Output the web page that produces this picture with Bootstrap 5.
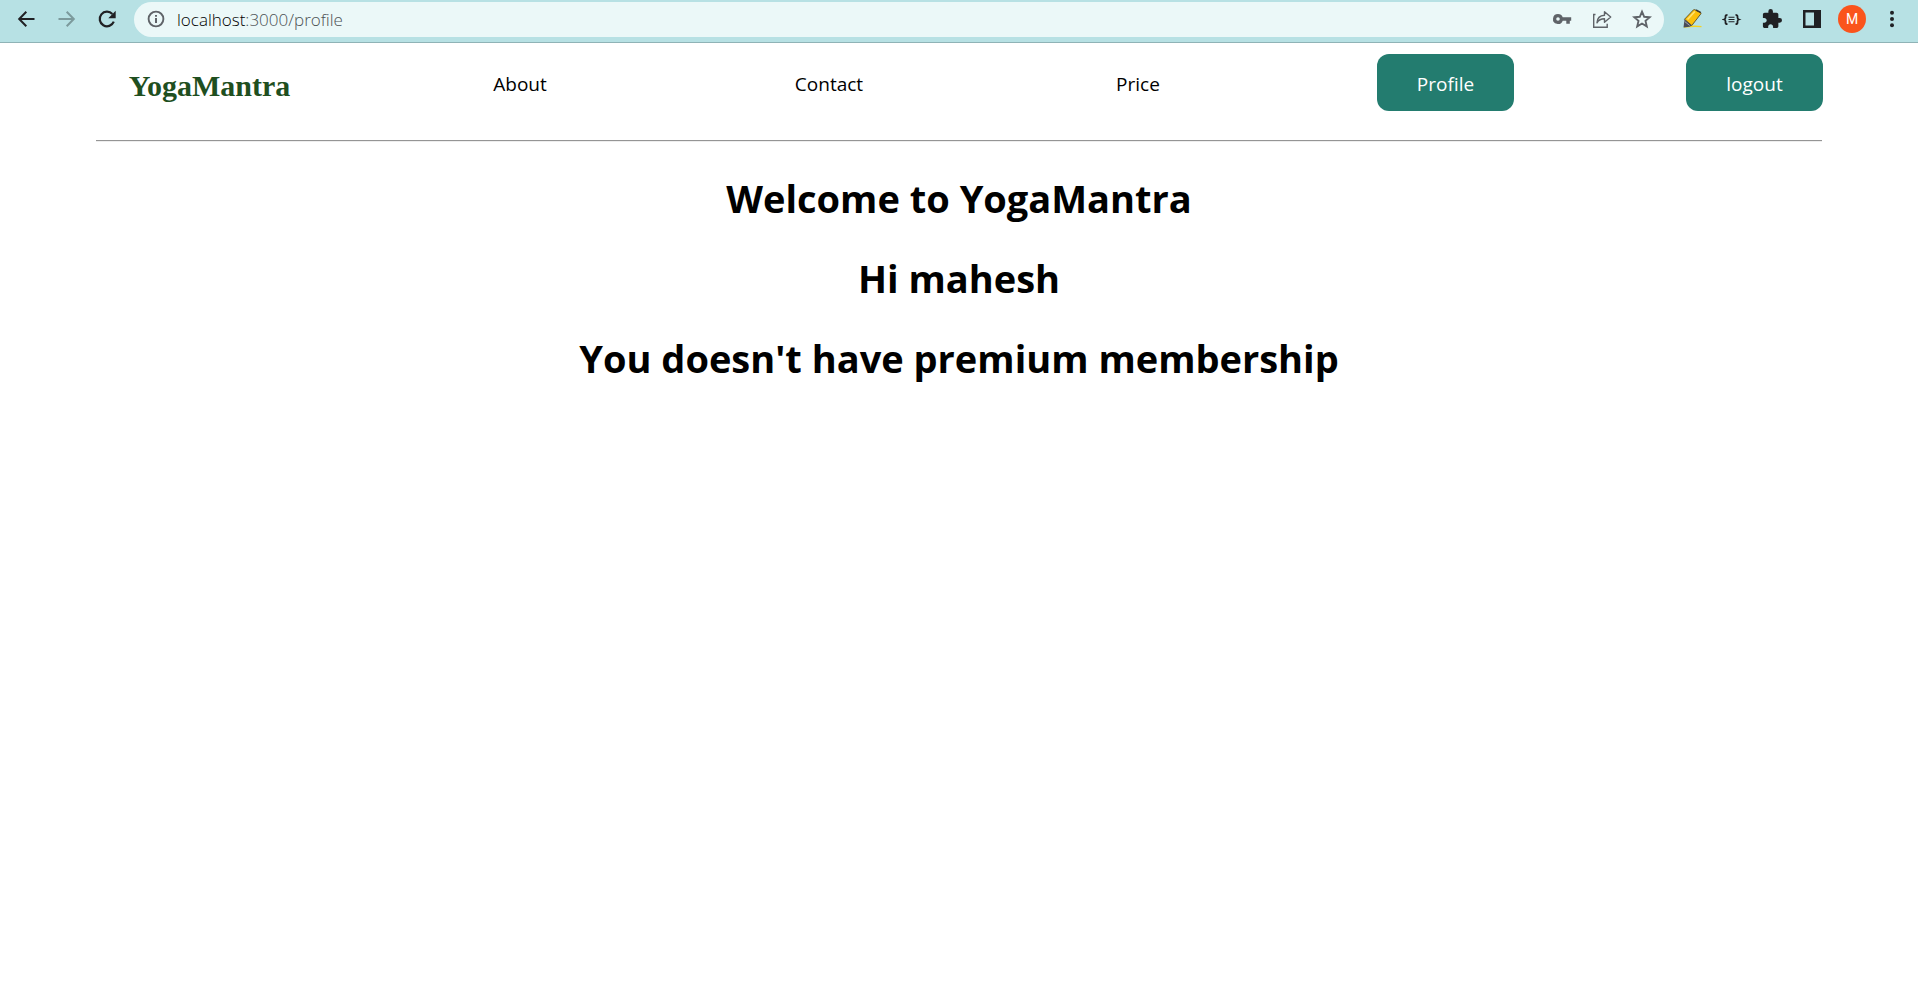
<!DOCTYPE html>
<html lang="en">
<head>
<meta charset="utf-8">
<meta name="viewport" content="width=device-width, initial-scale=1">
<title>YogaMantra</title>
<link href="https://cdn.jsdelivr.net/npm/bootstrap@5.3.0/dist/css/bootstrap.min.css" rel="stylesheet">
<style>
body{font-family:"Open Sans",sans-serif;color:#000;background:#fff}
.browser-bar{background:#b7e1e4;border-bottom:1px solid #8fb3b6;height:43px;padding:0 16px 4px 16px;gap:20px}
.browser-bar svg{display:block}
.tool{border:0;background:none;padding:0;width:20px;height:20px;color:#202124;flex:none}
.tool.faded{color:#7c9a9c}
.omnibox{background:#ebf8f8;border-radius:18px;height:35px;padding:0 12px;margin:0 -2px}
.omnibox .tool{color:#5f6368}
.address{font-size:17px;line-height:24px;font-weight:300;color:#4c5154;padding:2px 0 0 3px}
.address b{font-weight:inherit;color:#000}
.omnibox-tools{gap:20px}
.avatar{width:28px;height:28px;margin:0 -4px;border-radius:50%;border:0;padding:0;background:#fa541c;color:#fff;font:14px/28px Roboto,sans-serif;flex:none}
.site-nav{padding:11px 9px 0 55px}
.brand{display:block;padding-top:6px;font:bold 30px/36px "Liberation Serif",serif;color:#1f4f1f;text-decoration:none}
.nav-text{display:block;padding:2px 0 0 3px;font-size:19px;line-height:28px;color:#000;text-decoration:none}
.nav-pill{background:#237c6f;color:#fff;border:0;border-radius:12px;font-size:19px;line-height:26px;padding:17px 40px 14px}
.divider{margin:29px 5% 0;border:0;border-top:1px solid #959595;border-bottom:1px solid #eee;opacity:1}
.welcome{padding-top:29px}
.welcome h1{font-size:38px;line-height:54px;font-weight:700;margin:0 0 26px}
</style>
<script src="https://cdn.jsdelivr.net/npm/bootstrap@5.3.0/dist/js/bootstrap.bundle.min.js"></script>
</head>
<body>
<div class="browser-bar d-flex align-items-center">
  <button class="tool" aria-label="Back"><svg viewBox="0 0 20 20" width="20" height="20" fill="none" stroke="currentColor" stroke-width="2"><path d="M18.500 10H3.500M10.300 2.800 3.200 10l7.100 7.200"/></svg></button>
  <button class="tool faded" aria-label="Forward"><svg viewBox="0 0 20 20" width="20" height="20" fill="none" stroke="currentColor" stroke-width="2"><path d="M2.500 10h15M10.700 2.800 17.800 10l-7.100 7.200"/></svg></button>
  <button class="tool" aria-label="Reload"><svg viewBox="0 0 20 20" width="20" height="20"><path d="M17.800 12.700A7.300 7.300 0 1 1 16.400 5" fill="none" stroke="currentColor" stroke-width="2.200"/><path d="M19.700 1.800v7.400h-7.400z" fill="currentColor"/></svg></button>
  <div class="omnibox d-flex align-items-center flex-grow-1">
    <button class="tool me-2" aria-label="Site information"><svg viewBox="0 0 20 20" width="20" height="20"><circle cx="10" cy="10" r="7.400" fill="none" stroke="currentColor" stroke-width="1.900"/><path d="M9 9h2v5H9zM9 6h2v1.800H9z" fill="currentColor"/></svg></button>
    <span class="address flex-grow-1"><b>localhost</b>:3000/profile</span>
    <span class="omnibox-tools d-flex">
      <button class="tool" aria-label="Passwords"><svg viewBox="0 0 20 20" width="20" height="20"><path fill="currentColor" fill-rule="evenodd" d="M6 5a5 5 0 1 0 4.700 6.700h3.600v3h3.500v-3h1.400V8.300h-8.500A5 5 0 0 0 6 5zm0 3.200a1.800 1.800 0 1 1 0 3.600 1.800 1.800 0 0 1 0-3.600z"/></svg></button>
      <button class="tool" aria-label="Share"><svg viewBox="0 0 20 20" width="20" height="20" fill="none" stroke="currentColor" stroke-width="1.400"><path d="M3.500 5.500H1.700v12.800h13.500v-3.600"/><path d="M5 13.800c.2-4.800 3-7.200 7.500-7.500V2.700L18.700 8l-6.200 5.200V9.800c-3.500 0-5.800 1-7.500 4z" stroke-linejoin="round"/></svg></button>
      <button class="tool" aria-label="Bookmark"><svg viewBox="0 0 20 20" width="20" height="20" fill="none" stroke="currentColor" stroke-width="1.900"><path d="m10 2.700 2.200 5.100 5.500.5-4.200 3.600 1.300 5.500-4.800-2.900-4.800 2.900 1.300-5.500-4.200-3.600 5.500-.5z"/></svg></button>
    </span>
  </div>
  <button class="tool" aria-label="Highlighter extension"><svg viewBox="0 0 20 20" width="20" height="20"><path d="M2 18.200q9-1.500 17.500-.6" stroke="#f5d324" stroke-width="1.300" fill="none"/><path d="M11.500.8q.6-.4 1.300-.1l5.600 2.600q1 .6.500 1.500L9.800 16.500 2.500 10.300z" fill="#fbbf0c" stroke="#4b4020" stroke-width=".8"/><path d="M12.800 2.500 5.500 10.500" stroke="#ffe273" stroke-width="1.600"/><path d="m14 1 4.800 2.600" stroke="#3d3a35" stroke-width="1.600"/><path d="M2.500 10.300 9.800 16.500 7.500 17.700l-6 .8z" fill="#4a4c56"/><path d="m2.700 12.500 5 4" stroke="#a5a8b2"/></svg></button>
  <button class="tool" aria-label="JSON extension"><svg viewBox="0 0 20 20" width="20" height="20" fill="none" stroke="currentColor" stroke-width="1.800"><path d="M5.500 5.800q-2 0-2 1.700v1.300q0 1.200-1.400 1.700 1.400.5 1.400 1.700v1.300q0 1.700 2 1.700M13.500 5.800q2 0 2 1.700v1.300q0 1.200 1.400 1.700-1.400.5-1.400 1.700v1.300q0 1.700-2 1.700"/><path stroke-width="1.100" d="M6.500 8.300h6M6.500 10.500h6M6.500 12.700h6"/></svg></button>
  <button class="tool" aria-label="Extensions"><svg viewBox="1 1 22 22" width="20" height="20" fill="currentColor"><path d="M20.500 11H19V7c0-1.100-.9-2-2-2h-4V3.500a2.500 2.500 0 0 0-5 0V5H4c-1.100 0-2 .9-2 2v3.800h1.500c1.500 0 2.700 1.200 2.700 2.700S5 16.200 3.500 16.200H2V20c0 1.100.9 2 2 2h3.800v-1.500c0-1.500 1.200-2.700 2.700-2.700s2.700 1.200 2.700 2.700V22H17c1.100 0 2-.9 2-2v-4h1.500a2.500 2.500 0 0 0 0-5z"/></svg></button>
  <button class="tool" aria-label="Side panel"><svg viewBox="0 0 20 20" width="20" height="20"><path fill="currentColor" fill-rule="evenodd" d="M1 1h18v18H1zM3.500 3.500v13h8.500v-13z"/></svg></button>
  <button class="avatar" aria-label="Account M">M</button>
  <button class="tool" aria-label="Menu"><svg viewBox="0 0 20 20" width="20" height="20" fill="currentColor"><circle cx="10" cy="3.700" r="2"/><circle cx="10" cy="10" r="2"/><circle cx="10" cy="16.300" r="2"/></svg></button>
</div>
<nav class="site-nav row g-0 align-items-center text-center">
  <div class="col"><a class="brand" href="#">YogaMantra</a></div>
  <div class="col"><a class="nav-text" href="#">About</a></div>
  <div class="col"><a class="nav-text" href="#">Contact</a></div>
  <div class="col"><a class="nav-text" href="#">Price</a></div>
  <div class="col"><button class="nav-pill">Profile</button></div>
  <div class="col"><button class="nav-pill">logout</button></div>
</nav>
<hr class="divider">
<main class="welcome text-center">
  <h1>Welcome to YogaMantra</h1>
  <h1>Hi mahesh</h1>
  <h1>You doesn't have premium membership</h1>
</main>
</body>
</html>
